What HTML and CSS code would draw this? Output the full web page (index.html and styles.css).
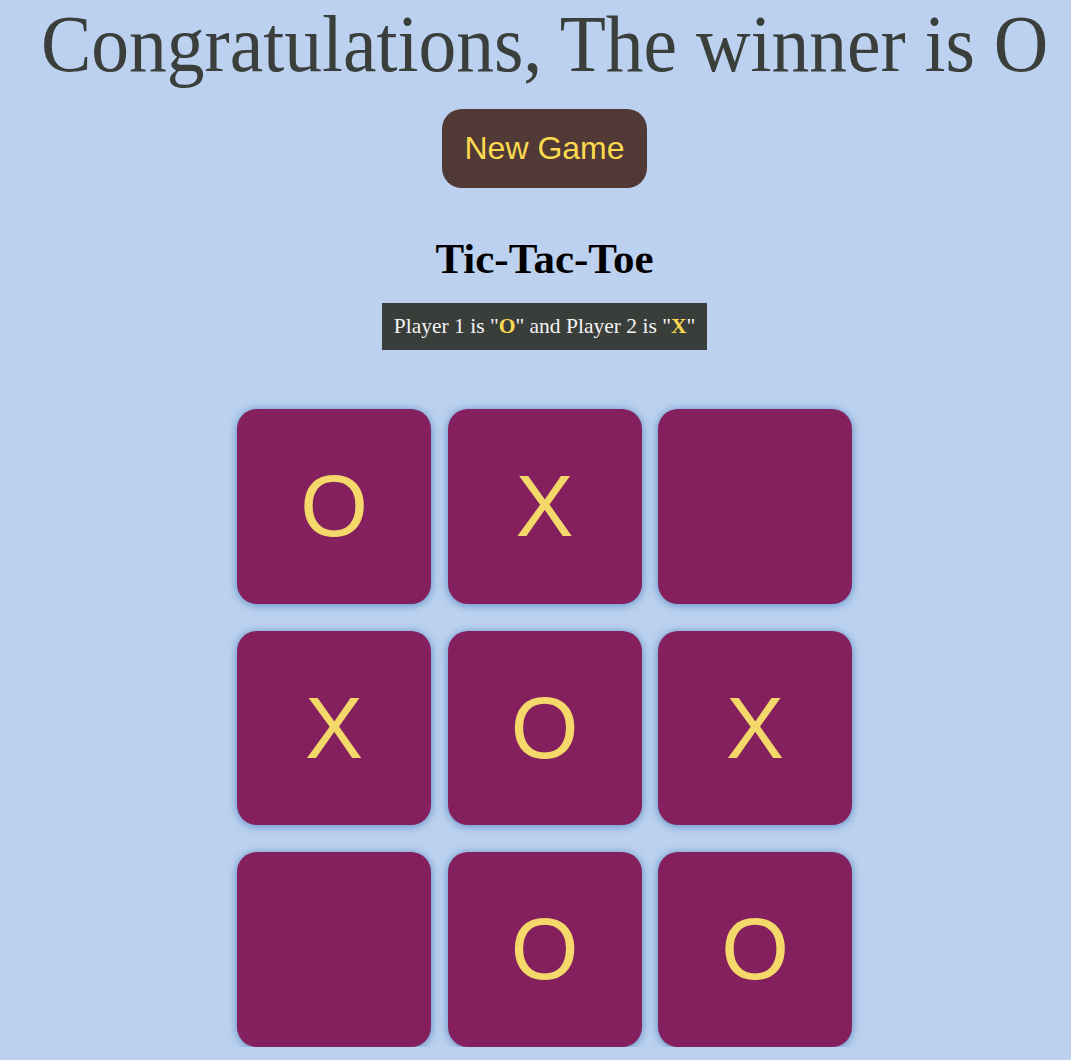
FILE: index.html
```html
<!DOCTYPE html>
<html>
<head>
<meta charset="utf-8">
<title>Tic-Tac-Toe</title>
<link rel="stylesheet" href="styles.css">
</head>
<body>
<div class="page">
  <h1 class="winner">Congratulations, The winner is O</h1>
  <button class="new-game">New Game</button>
  <h2 class="title">Tic-Tac-Toe</h2>
  <div class="players">Player 1 is "<b class="mark">O</b>" and Player 2 is "<b class="mark">X</b>"</div>
  <div class="board">
    <div class="cell">O</div>
    <div class="cell">X</div>
    <div class="cell"></div>
    <div class="cell">X</div>
    <div class="cell">O</div>
    <div class="cell">X</div>
    <div class="cell"></div>
    <div class="cell">O</div>
    <div class="cell">O</div>
  </div>
</div>
</body>
</html>
```

FILE: styles.css
```css
html, body {
  margin: 0;
  padding: 0;
  background: #bbd1ef;
  overflow: hidden;
}

.page {
  display: flex;
  flex-direction: column;
  align-items: center;
  padding-left: 18px;
  padding-top: 5px;
  font-family: "Liberation Serif", "Times New Roman", serif;
}

.winner {
  margin: 0;
  font-size: 80px;
  line-height: 78px;
  font-weight: normal;
  color: #3b3f3c;
  white-space: nowrap;
  transform: scaleX(0.944);
}

.new-game {
  margin-top: 26px;
  padding: 21px 22px;
  border: none;
  border-radius: 20px;
  background: #513a35;
  color: #fdd94f;
  font-family: "Liberation Sans", Arial, sans-serif;
  font-size: 32px;
  line-height: 37px;
}

.title {
  margin: 47px 0 0;
  font-size: 43px;
  line-height: 48px;
  font-weight: bold;
  color: #000;
}

.players {
  margin-top: 20px;
  padding: 0 12px;
  height: 47px;
  line-height: 47px;
  background: #3a3e3b;
  color: #f4f4f4;
  font-size: 21.5px;
}

.mark {
  color: #fcd94f;
}

.board {
  margin-top: 59px;
  display: grid;
  grid-template-columns: repeat(3, 194px);
  grid-auto-rows: 194.5px;
  column-gap: 16.5px;
  row-gap: 27px;
}

.cell {
  display: flex;
  align-items: center;
  justify-content: center;
  background: #84205e;
  border-radius: 20px;
  box-shadow: 0 1px 8px rgba(55, 115, 180, 0.75);
  color: #f4d96a;
  font-family: "Liberation Sans", Arial, sans-serif;
  font-size: 87px;
}
```
